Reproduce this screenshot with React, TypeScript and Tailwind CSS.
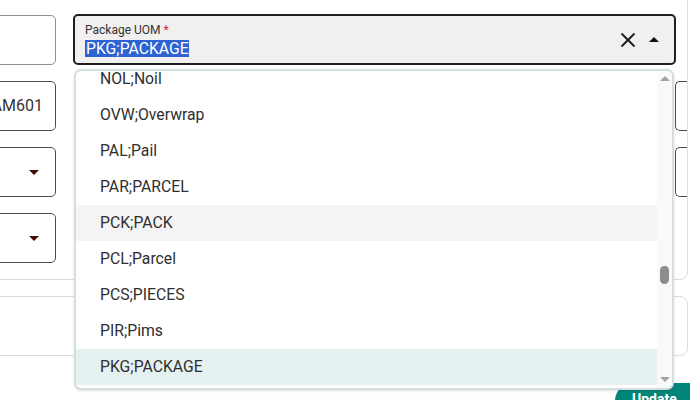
import { X } from 'lucide-react';

const options = [
  'NOL;Noil',
  'OVW;Overwrap',
  'PAL;Pail',
  'PAR;PARCEL',
  'PCK;PACK',
  'PCL;Parcel',
  'PCS;PIECES',
  'PIR;Pims',
  'PKG;PACKAGE',
];

function Caret({ up = false, color }: { up?: boolean; color: string }) {
  return (
    <svg width="10" height="5" viewBox="0 0 10 5" className="shrink-0">
      <path d={up ? 'M0 5 L5 0 L10 5 Z' : 'M0 0 L10 0 L5 5 Z'} fill={color} />
    </svg>
  );
}

function Field({ border, children }: { border: string; children?: React.ReactNode }) {
  return (
    <div className={`h-[50px] rounded-[5px] border bg-white flex items-center justify-end pr-[12px] text-[16px] text-[#333] ${border}`}>
      {children}
    </div>
  );
}

export default function App() {
  return (
    <div className="relative w-[690px] h-[400px] overflow-hidden bg-white font-['Roboto','Liberation_Sans',sans-serif]">
      {/* form card */}
      <div className="-ml-[40px] w-[728px] rounded-b-[8px] border-b border-r border-[#dcdcdc] pt-[15px] pb-[16px]">
        <div className="flex">
          <div className="w-[96px] flex flex-col gap-[16px]">
            <Field border="border-[#8f8f8f]" />
            <Field border="border-[#524848]">AM601</Field>
            <Field border="border-[#524848]">
              <Caret color="#4a0a0a" />
              <span className="w-[4px]" />
            </Field>
            <Field border="border-[#524848]">
              <Caret color="#4a0a0a" />
              <span className="w-[4px]" />
            </Field>
          </div>

          <div className="ml-[17px] w-[601px] flex flex-col gap-[15px]">
            <div className="w-[603px] h-[51px] -mt-[1px] rounded-[5px] border-2 border-[#1e1e1e] bg-[#f1f0ef] flex items-center pl-[10px] pr-[15px]">
              <div className="flex-1 flex flex-col">
                <span className="text-[12px] leading-[14px] text-[#333] mt-[1px]">
                  Package UOM <span className="text-[#d32f2f]">*</span>
                </span>
                <span className="mt-[3px] self-start bg-[#2d63d2] text-white text-[15.75px] leading-[17px] pl-[1px]">PKG;PACKAGE</span>
              </div>
              <X size={24} strokeWidth={1.8} className="text-[#1a1a1a] mr-[9px] mt-[1px]" />
              <Caret up color="#111" />
            </div>
            <div className="h-[50px]" />
            <div className="h-[50px]" />
            <div className="h-[50px]" />
          </div>

          <div className="ml-[1px] flex-1 flex flex-col gap-[16px] pt-[66px]">
            <div className="h-[50px] rounded-l-[5px] border border-r-0 border-[#524848]" />
            <div className="h-[50px] rounded-l-[5px] border border-r-0 border-[#524848]" />
          </div>
        </div>
      </div>

      {/* second card */}
      <div className="-ml-[40px] w-[728px] mt-[16px] h-[60px] rounded-[8px] border border-[#dcdcdc]" />

      {/* actions */}
      <div className="flex justify-end mt-[27px] -mr-[25px]">
        <button className="w-[100px] h-[36px] pl-[17px] rounded-full bg-[#00857a] text-white text-[14px] font-bold flex items-start pt-[6px]">
          Update
        </button>
      </div>

      {/* dropdown popup */}
      <div className="absolute left-[74px] top-[69px] w-[600px] h-[321px] rounded-[7px] border-2 border-[#d3dede] bg-white shadow-sm flex overflow-hidden">
        <div className="flex-1 overflow-hidden">
          <div className="-mt-[10px]">
            {options.map((o) => (
              <div
                key={o}
                className={`h-[36px] flex items-center pl-[24px] text-[15.75px] text-[#2f2f2f] ${
                  o === 'PCK;PACK' ? 'bg-[#f4f4f4]' : o === 'PKG;PACKAGE' ? 'bg-[#e5f1f1]' : ''
                }`}
              >
                {o}
              </div>
            ))}
          </div>
        </div>
        <div className="relative w-[15px] bg-[#f9f9f9]">
          <div className="absolute left-[3px] top-[5px]">
            <Caret up color="#a3a3a3" />
          </div>
          <div className="absolute left-[3px] top-[195px] w-[9px] h-[18px] rounded-full bg-[#8c8c8c]" />
          <div className="absolute left-[3px] bottom-[6px]">
            <Caret color="#a3a3a3" />
          </div>
        </div>
      </div>
    </div>
  );
}
